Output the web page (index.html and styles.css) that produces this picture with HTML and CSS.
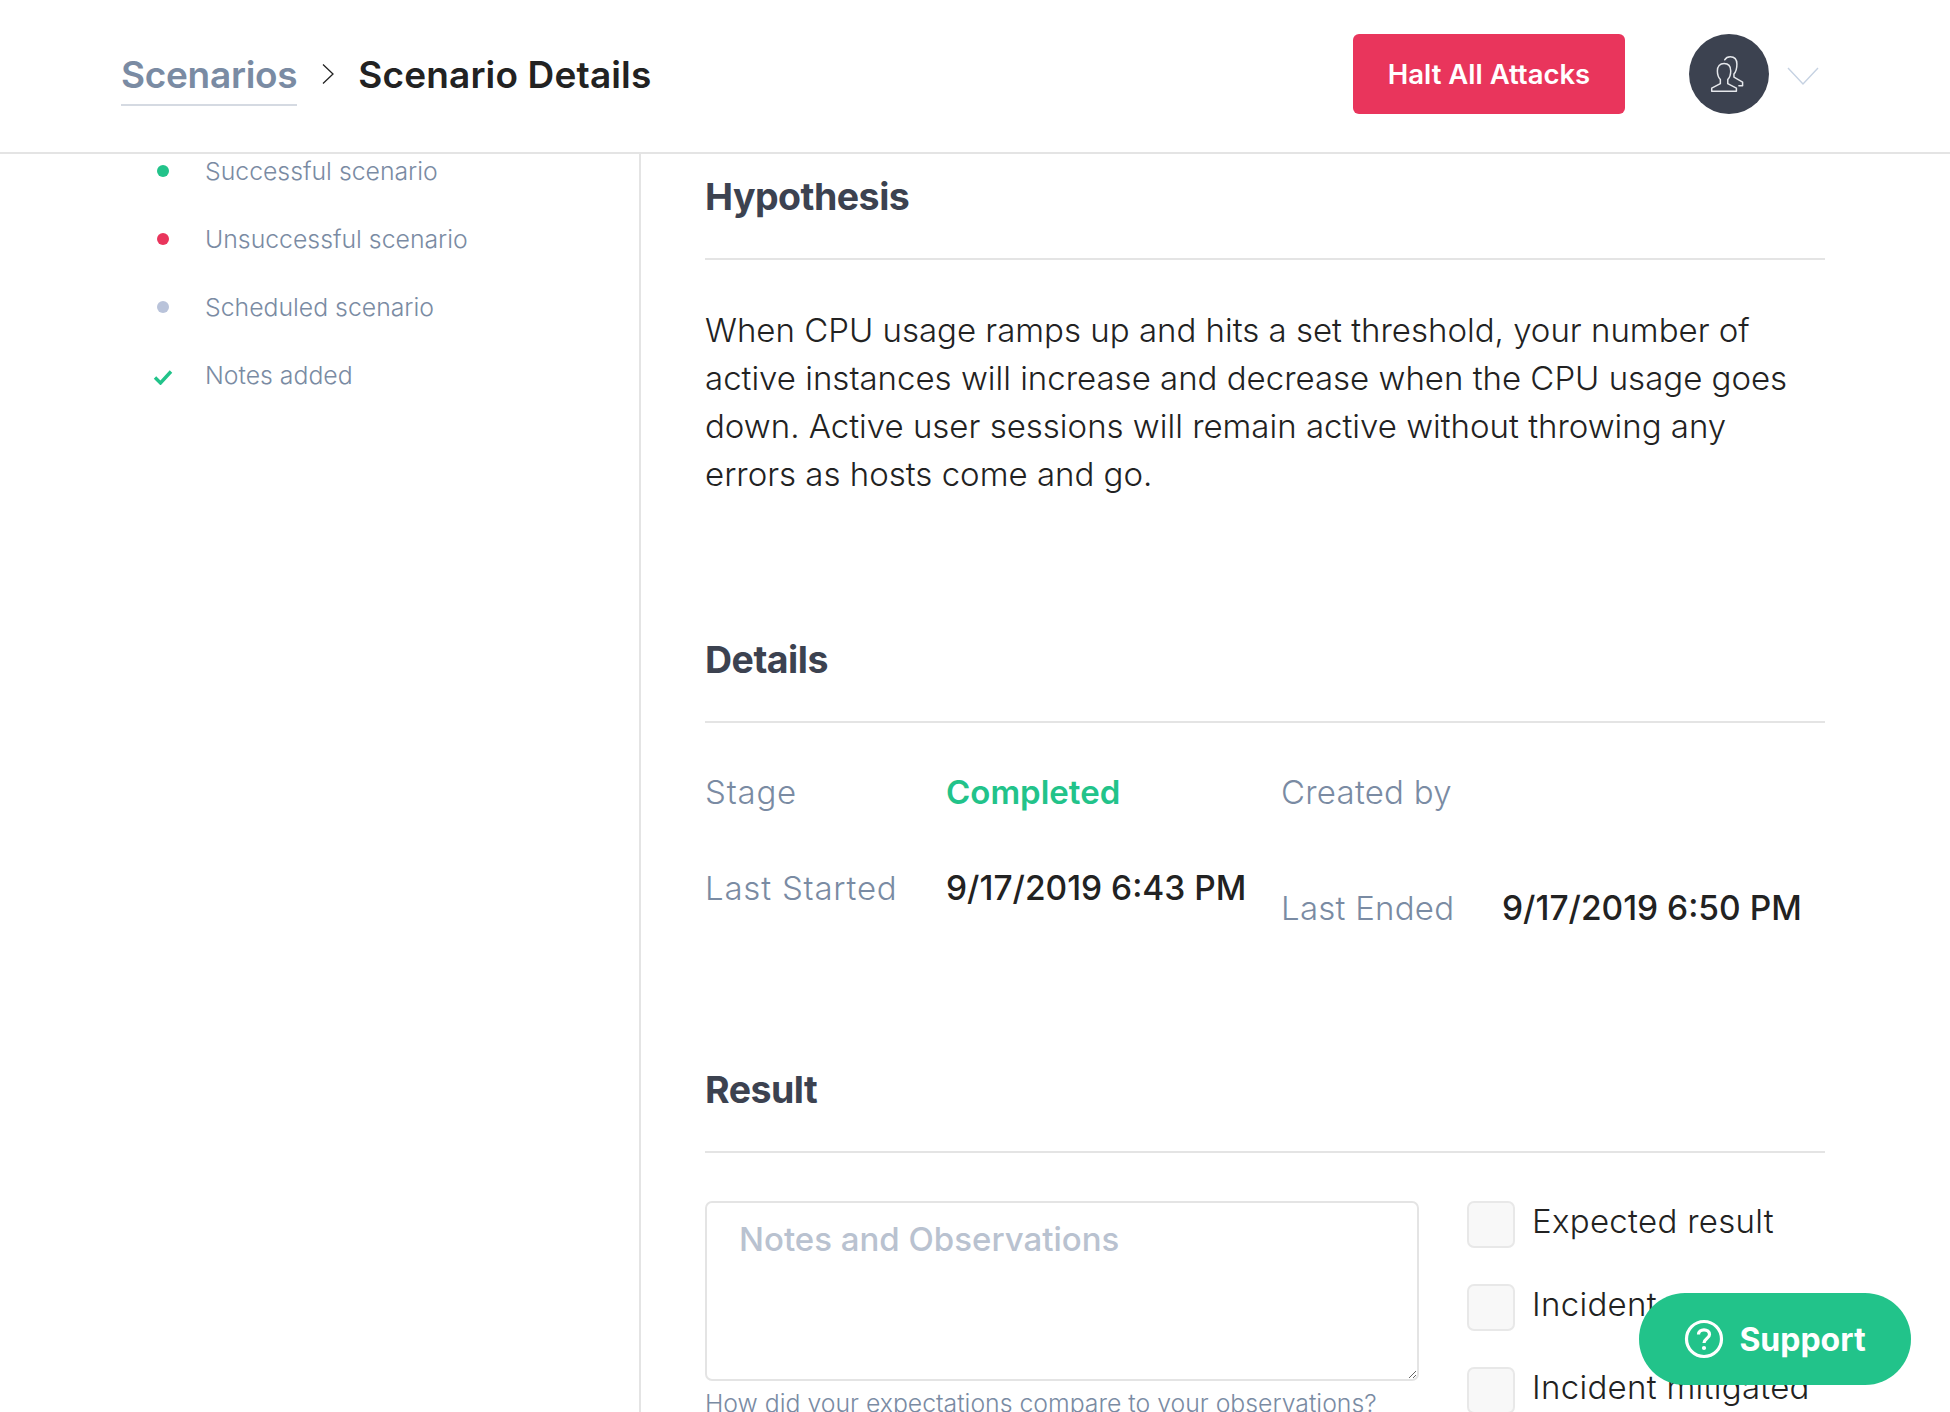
FILE: index.html
```html
<!DOCTYPE html>
<html lang="en">
<head>
<meta charset="utf-8">
<title>Scenario Details</title>
<link rel="stylesheet" href="styles.css">
</head>
<body>
<header class="topbar">
  <nav class="crumbs">
    <a class="crumb-link">Scenarios</a>
    <svg class="crumb-sep" width="14" height="22" viewBox="0 0 14 22"><path d="M2 1.5 L12 11 L2 20.5" fill="none" stroke="#222" stroke-width="1.3"/></svg>
    <span class="crumb-current">Scenario Details</span>
  </nav>
  <div class="actions">
    <button class="halt">Halt All Attacks</button>
    <div class="avatar">
      <svg width="42" height="42" viewBox="0 0 34 34" fill="none" stroke="#e6e8ec" stroke-width="1.2" stroke-linejoin="round" stroke-linecap="round">
        <path d="M3 31 V28.5 L10 24.8 V21.5 C8.2 19.5 7.6 17.5 7.6 14.5 C7.6 10.8 9.6 8.5 13 8.5 C16.4 8.5 18.4 10.8 18.4 14.5 C18.4 17.5 17.8 19.5 16 21.5 V24.8 L23 28.5 V31 Z"/>
        <path d="M13.5 5.5 C14.5 3.8 16 3 18 3 C21.4 3 23.4 5.3 23.4 9 C23.4 12 23 15 21 17 V19.5 L28 23.5 V26.5 H25"/>
      </svg>
    </div>
    <svg class="caret" width="32" height="20" viewBox="0 0 32 20"><path d="M1 1 L16 17 L31 1" fill="none" stroke="#c6d2e2" stroke-width="1.4"/></svg>
  </div>
</header>
<div class="layout">
  <aside class="sidebar">
    <ul class="legend">
      <li class="legend-item"><span class="mark"><i class="dot dot-green"></i></span>Successful scenario</li>
      <li class="legend-item"><span class="mark"><i class="dot dot-red"></i></span>Unsuccessful scenario</li>
      <li class="legend-item"><span class="mark"><i class="dot dot-blue"></i></span>Scheduled scenario</li>
      <li class="legend-item"><span class="mark"><svg class="check-mark" width="20" height="16" viewBox="0 0 20 16"><path d="M2 8.5 L7.5 14 L18 2.5" fill="none" stroke="#22c38a" stroke-width="3.4"/></svg></span>Notes added</li>
    </ul>
  </aside>
  <main class="content">
    <section class="block block-hypothesis">
      <h2 class="block-title">Hypothesis</h2>
      <p class="hypothesis">When CPU usage ramps up and hits a set threshold, your number of active instances will increase and decrease when the CPU usage goes down. Active user sessions will remain active without throwing any errors as hosts come and go.</p>
    </section>
    <section class="block block-details">
      <h2 class="block-title">Details</h2>
      <div class="details">
        <div class="detail-col">
          <div class="detail-row"><span class="label label-a">Stage</span><span class="value completed">Completed</span></div>
          <div class="detail-row"><span class="label label-a">Last Started</span><span class="value">9/17/2019 6:43 PM</span></div>
        </div>
        <div class="detail-col detail-col-b">
          <div class="detail-row"><span class="label label-b">Created by</span></div>
          <div class="detail-row detail-row-b"><span class="label label-b">Last Ended</span><span class="value">9/17/2019 6:50 PM</span></div>
        </div>
      </div>
    </section>
    <section class="block">
      <h2 class="block-title">Result</h2>
      <div class="result">
        <div class="notes">
          <textarea class="notes-input" placeholder="Notes and Observations"></textarea>
          <p class="hint">How did your expectations compare to your observations?</p>
        </div>
        <div class="checks">
          <label class="check"><span class="box"></span>Expected result</label>
          <label class="check"><span class="box"></span>Incident</label>
          <label class="check"><span class="box"></span>Incident mitigated</label>
        </div>
      </div>
    </section>
  </main>
</div>
<button class="support">
  <svg width="40" height="40" viewBox="0 0 40 40"><circle cx="20" cy="20" r="17.5" fill="none" stroke="#fff" stroke-width="3.2"/><path d="M14.5 15.5 C14.5 12.5 17 10.8 20 10.8 C23 10.8 25.5 12.6 25.5 15.5 C25.5 19.5 20 19.5 20 24" fill="none" stroke="#fff" stroke-width="3.2"/><circle cx="20" cy="29" r="2.1" fill="#fff"/></svg>
  <span>Support</span>
</button>
</body>
</html>
```
FILE: styles.css
```css
* { box-sizing: border-box; }
html, body { margin: 0; height: 1412px; overflow: hidden; }
body { font-family: "Inter", "Liberation Sans", sans-serif; color: #222; background: #fff; display: flex; flex-direction: column; }

.topbar { height: 154px; flex: none; border-bottom: 2px solid #e4e4e4; display: flex; align-items: center; justify-content: space-between; padding: 0 131px 4px 121px; }
.crumbs { display: flex; align-items: center; font-size: 37px; font-weight: 600; }
.crumb-link { color: #7a8ba3; border-bottom: 2px solid #d5dae2; padding-bottom: 7px; margin-top: 9px; letter-spacing: -0.3px; }
.crumb-sep { margin: 0 23px 0 24px; }
.crumb-current { color: #222; letter-spacing: 0.15px; }
.actions { display: flex; align-items: center; }
.halt { width: 272px; height: 80px; border: 0; border-radius: 6px; background: #e9355c; color: #fff; font: 600 27.5px "Inter", sans-serif; }
.avatar { width: 80px; height: 80px; margin-left: 64px; border-radius: 50%; background: #3c4250; display: flex; align-items: center; justify-content: center; }
.caret { margin-left: 18px; margin-top: 6px; }

.layout { flex: 1; display: flex; min-height: 0; }
.sidebar { width: 641px; flex: none; border-right: 2px solid #e4e4e4; overflow: hidden; }
.legend { list-style: none; margin: -17px 0 0; padding: 0 0 0 148px; }
.legend-item { height: 68px; display: flex; align-items: center; font-size: 24.8px; font-weight: 300; color: #7a8ba3; }
.mark { width: 57px; display: flex; align-items: center; }
.dot { width: 12px; height: 12px; border-radius: 50%; margin-left: 9px; }
.check-mark { margin-left: 5px; margin-top: 4px; }
.dot-green { background: #22c38a; }
.dot-red { background: #e9355c; }
.dot-blue { background: #b9c3da; }

.content { width: 1120px; margin-left: 64px; }
.block-title { margin: 0; height: 106px; padding-top: 20px; font-size: 37.5px; line-height: 46px; font-weight: 700; color: #3c4250; border-bottom: 2px solid #e4e4e4; letter-spacing: -0.5px; }
.block-hypothesis { height: 463px; }
.hypothesis { margin: 46px 0 0; font-size: 33px; line-height: 48px; font-weight: 300; color: #222; }
.block-details { height: 430px; }
.details { display: flex; margin-top: 45px; }
.detail-col { width: 576px; display: flex; flex-direction: column; }
.detail-col-b { flex: 1; }
.detail-row { display: flex; align-items: center; height: 48px; margin-bottom: 48px; font-size: 33px; }
.label { font-weight: 300; color: #7a8ba3; white-space: nowrap; }
.label-a { width: 241px; letter-spacing: 0.8px; }
.label-b { width: 221px; letter-spacing: 0.25px; }
.detail-row-b { margin-top: 20px; }
.value { font-weight: 500; font-size: 33.5px; color: #222; white-space: nowrap; }
.completed { color: #22c38a; font-weight: 600; font-size: 33px; }

.result { display: flex; margin-top: 48px; }
.notes { width: 714px; }
.notes-input { display: block; width: 714px; height: 180px; padding: 16px 32px; border: 2px solid #e4e4e4; border-radius: 7px; font: 500 33px "Inter", sans-serif; }
.notes-input::placeholder { color: #b9c2d0; }
.hint { margin: 7px 0 0; font-size: 24.8px; font-weight: 300; color: #7a8ba3; }
.checks { margin-left: 48px; display: flex; flex-direction: column; }
.check { display: flex; align-items: flex-start; height: 83px; font-size: 33px; font-weight: 300; color: #222; letter-spacing: 0.3px; }
.box { width: 48px; height: 47px; margin-right: 17px; border: 2px solid #e8e8e8; border-radius: 7px; background: #f8f8f8; }

.support { position: fixed; left: 1639px; top: 1293px; width: 272px; height: 92px; border: 0; border-radius: 46px; background: #22c38a; color: #fff; display: flex; align-items: center; justify-content: center; gap: 15px; font: 700 32px "Inter", sans-serif; }
```
